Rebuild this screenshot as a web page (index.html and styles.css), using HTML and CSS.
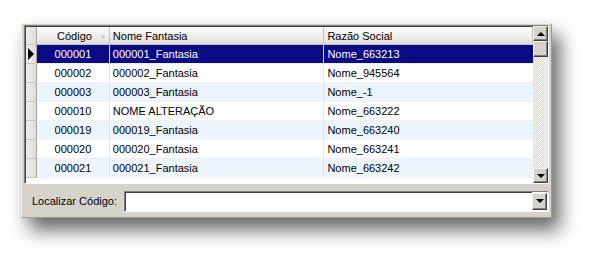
FILE: index.html
```html
<!DOCTYPE html>
<html lang="pt">
<head>
    <meta charset="UTF-8">
    <title>Localizar Código</title>
    <link rel="stylesheet" href="styles.css">
</head>
<body>
    <div class="page">
        <div class="panel">
            <div class="grid">
                <div class="grid-body">
                    <div class="row header">
                        <div class="ind"></div>
                        <div class="cell c1">Código <span class="sort">&#9650;</span></div>
                        <div class="cell c2">Nome Fantasia</div>
                        <div class="cell c3">Razão Social</div>
                    </div>
                    <div class="row selected">
                        <div class="ind"><span class="arrow"></span></div>
                        <div class="cell c1">000001</div>
                        <div class="cell c2">000001_Fantasia</div>
                        <div class="cell c3">Nome_663213</div>
                    </div>
                    <div class="row">
                        <div class="ind"></div>
                        <div class="cell c1">000002</div>
                        <div class="cell c2">000002_Fantasia</div>
                        <div class="cell c3">Nome_945564</div>
                    </div>
                    <div class="row alt">
                        <div class="ind"></div>
                        <div class="cell c1">000003</div>
                        <div class="cell c2">000003_Fantasia</div>
                        <div class="cell c3">Nome_-1</div>
                    </div>
                    <div class="row">
                        <div class="ind"></div>
                        <div class="cell c1">000010</div>
                        <div class="cell c2">NOME ALTERAÇÃO</div>
                        <div class="cell c3">Nome_663222</div>
                    </div>
                    <div class="row alt">
                        <div class="ind"></div>
                        <div class="cell c1">000019</div>
                        <div class="cell c2">000019_Fantasia</div>
                        <div class="cell c3">Nome_663240</div>
                    </div>
                    <div class="row">
                        <div class="ind"></div>
                        <div class="cell c1">000020</div>
                        <div class="cell c2">000020_Fantasia</div>
                        <div class="cell c3">Nome_663241</div>
                    </div>
                    <div class="row alt">
                        <div class="ind"></div>
                        <div class="cell c1">000021</div>
                        <div class="cell c2">000021_Fantasia</div>
                        <div class="cell c3">Nome_663242</div>
                    </div>
                </div>
                <div class="scrollbar">
                    <div class="sb-btn"><span class="tri up"></span></div>
                    <div class="sb-thumb"></div>
                    <div class="sb-track"></div>
                    <div class="sb-btn"><span class="tri down"></span></div>
                </div>
            </div>
            <div class="search">
                <label class="search-label">Localizar Código:</label>
                <div class="combo">
                    <div class="combo-input"></div>
                    <div class="combo-btn"><span class="tri down"></span></div>
                </div>
            </div>
        </div>
    </div>
</body>
</html>
```

FILE: styles.css
```css
body {
    margin: 0;
    background: #fff;
    font-family: "Liberation Sans", Arial, sans-serif;
    font-size: 11px;
    color: #000;
}
.page {
    height: 260px;
    padding: 23px 0 0 21px;
    box-sizing: border-box;
}
.panel {
    width: 531px;
    height: 195px;
    box-sizing: border-box;
    background: #d6d3cb;
    border: 1px solid;
    border-color: #f2f1ed #9d9a92 #9d9a92 #f2f1ed;
    padding: 1px 2px 0 2px;
    box-shadow: 8px 12px 18px rgba(0, 0, 0, 0.6);
}
.grid {
    display: flex;
    height: 159px;
    border: 1px solid;
    border-color: #808080 #fff #fff #808080;
    box-sizing: border-box;
    background: #fff;
}
.grid-body {
    flex: 1;
    border-top: 1px solid #404040;
    border-left: 1px solid #404040;
    overflow: hidden;
}
.row {
    display: flex;
    height: 19px;
    box-sizing: border-box;
    border-bottom: 1px solid #eef0f3;
}
.row.alt {
    background: #ecf4fd;
}
.row.selected {
    background: #0b0a84;
    color: #fff;
}
.row.header {
    height: 18px;
    background: linear-gradient(#fafafa, #eceae6 70%, #dedcd6);
    border-bottom: 1px solid #c4c2ba;
}
.ind {
    width: 10px;
    flex: none;
    background: linear-gradient(90deg, #f0efec, #dedcd6);
    border-right: 1px solid #a8a69f;
    display: flex;
    align-items: center;
    justify-content: center;
}
.row .ind {
    border-bottom: 1px solid #c8c6c0;
    margin-bottom: -1px;
}
.arrow {
    width: 0;
    height: 0;
    border-top: 6px solid transparent;
    border-bottom: 6px solid transparent;
    border-left: 6px solid #000;
}
.cell {
    display: flex;
    align-items: center;
    padding: 0 3px;
    box-sizing: border-box;
    border-right: 1px solid #e4e4e4;
    white-space: nowrap;
}
.header .cell {
    border-right: 1px solid #c4c2ba;
}
.selected .cell {
    border-right-color: #d8d8e8;
}
.c1 {
    width: 73px;
    justify-content: center;
}
.header .c1 {
    justify-content: flex-end;
    padding-right: 3px;
}
.sort {
    color: #c8c6c0;
    font-size: 6px;
    margin-left: 8px;
}
.c2 {
    width: 215px;
}
.c3 {
    width: 209px;
    border-right: none;
}
.scrollbar {
    width: 15px;
    flex: none;
    display: flex;
    flex-direction: column;
    background: #fff;
}
.sb-btn, .sb-thumb, .combo-btn {
    background: #d6d3cb;
    border: 1px solid;
    border-color: #f4f3ef #404040 #404040 #f4f3ef;
    box-shadow: inset -1px -1px 0 #808080;
    box-sizing: border-box;
    display: flex;
    align-items: center;
    justify-content: center;
}
.sb-btn {
    height: 15px;
}
.sb-thumb {
    height: 16px;
}
.sb-track {
    flex: 1;
    background-color: #fff;
    background-image: conic-gradient(#d6d3cb 25%, #fff 0 50%, #d6d3cb 0 75%, #fff 0);
    background-size: 2px 2px;
}
.tri {
    width: 0;
    height: 0;
    border-left: 4px solid transparent;
    border-right: 4px solid transparent;
}
.tri.up {
    border-bottom: 4px solid #000;
}
.tri.down {
    border-top: 4px solid #000;
}
.search {
    display: flex;
    align-items: center;
    height: 33px;
    padding: 1px 0 0 8px;
    box-sizing: border-box;
}
.search-label {
    width: 92px;
}
.combo {
    display: flex;
    width: 426px;
    height: 21px;
    box-sizing: border-box;
    border: 1px solid;
    border-color: #808080 #fff #fff #808080;
    background: #fff;
}
.combo-input {
    flex: 1;
    border-top: 1px solid #404040;
    border-left: 1px solid #404040;
}
.combo-btn {
    width: 15px;
    height: 17px;
    margin: 1px 1px 0 0;
}
```
